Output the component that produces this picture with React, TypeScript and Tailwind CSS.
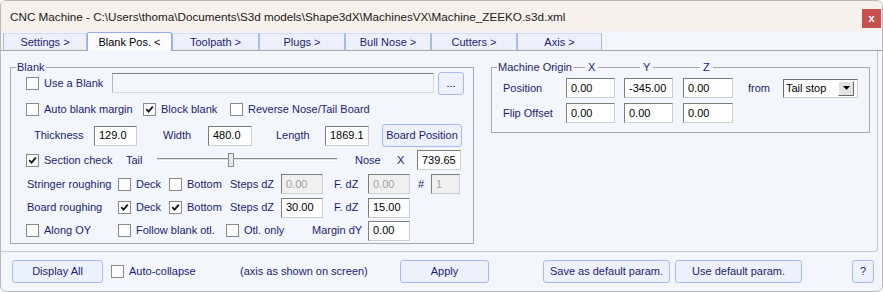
import React from 'react';

const TABS: { label: string; width: string; active?: boolean }[] = [
  { label: 'Settings >', width: 'w-[84px]' },
  { label: 'Blank Pos. <', width: 'w-[85px]', active: true },
  { label: 'Toolpath >', width: 'w-[87px]' },
  { label: 'Plugs >', width: 'w-[86px]' },
  { label: 'Bull Nose >', width: 'w-[86px]' },
  { label: 'Cutters >', width: 'w-[86px]' },
  { label: 'Axis >', width: 'w-[85px]' },
];

const Check = ({ checked = false }: { checked?: boolean }) => (
  <span className="w-[13px] h-[13px] shrink-0 bg-white border border-[#8a8a8a] flex items-center justify-center">
    {checked && (
      <svg width="9" height="9" viewBox="0 0 9 9">
        <path d="M1.2 4.2 L3.6 6.6 L7.8 1.6" fill="none" stroke="#1a1a1a" strokeWidth="1.9" />
      </svg>
    )}
  </span>
);

const CheckItem = ({ label, checked, className = '' }: { label: string; checked?: boolean; className?: string }) => (
  <div className={`flex items-center shrink-0 ${className}`}>
    <Check checked={checked} />
    <span className="ml-[5px] whitespace-nowrap">{label}</span>
  </div>
);

const Field = ({ value, className = '', disabled = false }: { value: string; className?: string; disabled?: boolean }) => (
  <div
    className={`h-[20px] shrink-0 flex items-center pl-[4px] border border-t-[#7e7e7e] border-l-[#7e7e7e] border-r-[#cfcfcf] border-b-[#cfcfcf] ${
      disabled ? 'bg-[#f0f0f0] text-[#a3a3a3]' : 'bg-white text-black'
    } ${className}`}
  >
    {value}
  </div>
);

const Btn = ({ label, className = '' }: { label: string; className?: string }) => (
  <div
    className={`h-[23px] shrink-0 flex items-center justify-center rounded-[3px] border border-[#a7baf3] bg-[#edf1fb] ${className}`}
  >
    {label}
  </div>
);

export default function App() {
  return (
    <div className="w-[883px] h-[292px] flex flex-col overflow-hidden border border-[#b9b9b9] rounded-[6px] bg-[#f3f6fc] text-[11px] leading-[13px] text-[#1d1d70] font-['Liberation_Sans',Arial,sans-serif]">
      {/* title bar */}
      <div className="h-[30px] shrink-0 flex items-center bg-[#f8f0ea] pl-[9px] pr-[1px]">
        <span className="flex-1 text-[11.7px] text-[#1a1a1a] whitespace-nowrap">
          CNC Machine - C:\Users\thoma\Documents\S3d models\Shape3dX\MachinesVX\Machine_ZEEKO.s3d.xml
        </span>
        <div className="w-[19px] h-[19px] mt-[5px] bg-[#c75050] text-white font-bold text-[11px] flex items-center justify-center">
          x
        </div>
      </div>

      {/* tabs */}
      <div className="h-[20px] shrink-0 flex items-end pl-[2px] border-b border-[#a4a4a4]">
        {TABS.map((tab) =>
          tab.active ? (
            <div
              key={tab.label}
              className={`${tab.width} h-[19px] -mb-px relative flex items-center justify-center bg-[#fdfdff] border border-b-0 border-[#94abf5] rounded-t-[2px] text-black`}
            >
              {tab.label}
            </div>
          ) : (
            <div
              key={tab.label}
              className={`${tab.width} h-[17px] flex items-center justify-center bg-[#edf0fa] border-x border-t border-x-[#a8baf2] border-t-[#d3dcf6]`}
            >
              {tab.label}
            </div>
          )
        )}
      </div>

      {/* panel */}
      <div className="h-[201px] w-[877px] shrink-0 flex items-start border-b border-r border-[#c6c6c6] rounded-br-[3px]">
        {/* Blank group */}
        <div className="relative ml-[9px] mt-[16px] w-[464px] h-[177px] border border-[#a9a9a9] flex flex-col pt-[3px]">
          <span className="absolute -top-[7px] left-[5px] px-[1px] bg-[#f3f6fc]">Blank</span>

          <div className="h-[24px] flex items-center">
            <div className="w-[86px] ml-[15px] flex items-center">
              <CheckItem label="Use a Blank" />
            </div>
            <div className="w-[322px] h-[20px] border border-t-[#7b7b7b] border-l-[#b5b5b5] border-r-[#dcdcdc] border-b-[#dcdcdc] bg-[#f3f6fc]" />
            <Btn label="..." className="ml-[4px] w-[26px] text-black" />
          </div>

          <div className="h-[28px] flex items-center">
            <CheckItem label="Auto blank margin" checked={false} className="ml-[15px] w-[117px]" />
            <CheckItem label="Block blank" checked className="w-[87px]" />
            <CheckItem label="Reverse Nose/Tail Board" />
          </div>

          <div className="h-[25px] flex items-center">
            <span className="ml-[23px] w-[60px]">Thickness</span>
            <Field value="129.0" className="w-[43px]" />
            <span className="ml-[26px] w-[45px]">Width</span>
            <Field value="480.0" className="w-[44px]" />
            <span className="ml-[24px] w-[49px]">Length</span>
            <Field value="1869.1" className="w-[44px]" />
            <Btn label="Board Position" className="ml-[13px] w-[80px]" />
          </div>

          <div className="h-[24px] flex items-center">
            <CheckItem label="Section check" checked className="ml-[15px] w-[100px]" />
            <span className="w-[31px]">Tail</span>
            <div className="relative w-[180px] h-[20px] shrink-0">
              <div className="absolute left-0 right-0 top-[8px] h-[3px] bg-[#dedede] border-t border-[#8e8e8e] border-b border-b-white" />
              <div className="absolute left-[71px] top-[3px] w-[6px] h-[14px] bg-[#e9e9e9] border border-[#8c8c8c]" />
            </div>
            <span className="ml-[18px] w-[42px]">Nose</span>
            <span className="w-[20px]">X</span>
            <Field value="739.65" className="w-[44px]" />
          </div>

          <div className="h-[24px] flex items-center">
            <span className="ml-[16px] w-[91px]">Stringer roughing</span>
            <CheckItem label="Deck" className="w-[51px]" />
            <CheckItem label="Bottom" className="w-[61px]" />
            <span className="w-[51px]">Steps dZ</span>
            <Field value="0.00" disabled className="w-[42px]" />
            <span className="w-[45px] pl-[11px]">F. dZ</span>
            <Field value="0.00" disabled className="w-[42px]" />
            <span className="w-[21px] pl-[8px]">#</span>
            <Field value="1" disabled className="w-[29px]" />
          </div>

          <div className="h-[23px] flex items-center">
            <span className="ml-[16px] w-[91px]">Board roughing</span>
            <CheckItem label="Deck" checked className="w-[51px]" />
            <CheckItem label="Bottom" checked className="w-[61px]" />
            <span className="w-[51px]">Steps dZ</span>
            <Field value="30.00" className="w-[42px]" />
            <span className="w-[45px] pl-[11px]">F. dZ</span>
            <Field value="15.00" className="w-[42px]" />
          </div>

          <div className="h-[23px] flex items-center">
            <CheckItem label="Along OY" className="ml-[15px] w-[92px]" />
            <CheckItem label="Follow blank otl." className="w-[108px]" />
            <CheckItem label="Otl. only" className="w-[86px]" />
            <span className="w-[56px]">Margin dY</span>
            <Field value="0.00" className="w-[42px]" />
          </div>
        </div>

        {/* Machine origin group */}
        <div className="relative ml-[17px] mt-[16px] w-[379px] h-[66px] border border-[#a9a9a9] flex flex-col">
          <span className="absolute -top-[7px] left-[5px] px-[1px] bg-[#f3f6fc]">Machine Origin</span>
          <span className="absolute -top-[7px] left-[93px] px-[3px] bg-[#f3f6fc]">X</span>
          <span className="absolute -top-[7px] left-[148px] px-[3px] bg-[#f3f6fc]">Y</span>
          <span className="absolute -top-[7px] left-[208px] px-[3px] bg-[#f3f6fc]">Z</span>

          <div className="mt-[10px] h-[20px] flex items-center">
            <span className="ml-[11px] w-[63px]">Position</span>
            <Field value="0.00" className="w-[49px]" />
            <Field value="-345.00" className="ml-[9px] w-[49px]" />
            <Field value="0.00" className="ml-[10px] w-[50px]" />
            <span className="w-[50px] pl-[15px]">from</span>
            <div className="w-[75px] h-[19px] shrink-0 flex items-center bg-white border border-t-[#6f6f6f] border-l-[#6f6f6f] border-r-[#cfcfcf] border-b-[#cfcfcf]">
              <span className="flex-1 pl-[2px] text-black whitespace-nowrap">Tail stop</span>
              <span className="w-[16px] h-[15px] mr-[3px] flex items-center justify-center bg-[#e4e4e4] border border-t-white border-l-white border-r-[#6a6a6a] border-b-[#6a6a6a]">
                <svg width="7" height="4" viewBox="0 0 7 4">
                  <path d="M0 0H7L3.5 4Z" fill="#000" />
                </svg>
              </span>
            </div>
          </div>

          <div className="mt-[5px] h-[20px] flex items-center">
            <span className="ml-[11px] w-[63px]">Flip Offset</span>
            <Field value="0.00" className="w-[49px]" />
            <Field value="0.00" className="ml-[9px] w-[49px]" />
            <Field value="0.00" className="ml-[10px] w-[50px]" />
          </div>
        </div>
      </div>

      {/* bottom bar */}
      <div className="flex-1 flex items-center">
        <Btn label="Display All" className="ml-[11px] w-[91px]" />
        <div className="ml-[8px] w-[129px] flex items-center">
          <CheckItem label="Auto-collapse" />
        </div>
        <span className="w-[160px] whitespace-nowrap">(axis as shown on screen)</span>
        <Btn label="Apply" className="w-[89px]" />
        <Btn label="Save as default param." className="ml-[54px] w-[127px]" />
        <Btn label="Use default param." className="ml-[5px] w-[127px]" />
        <Btn label="?" className="ml-[50px] w-[22px]" />
      </div>
    </div>
  );
}
